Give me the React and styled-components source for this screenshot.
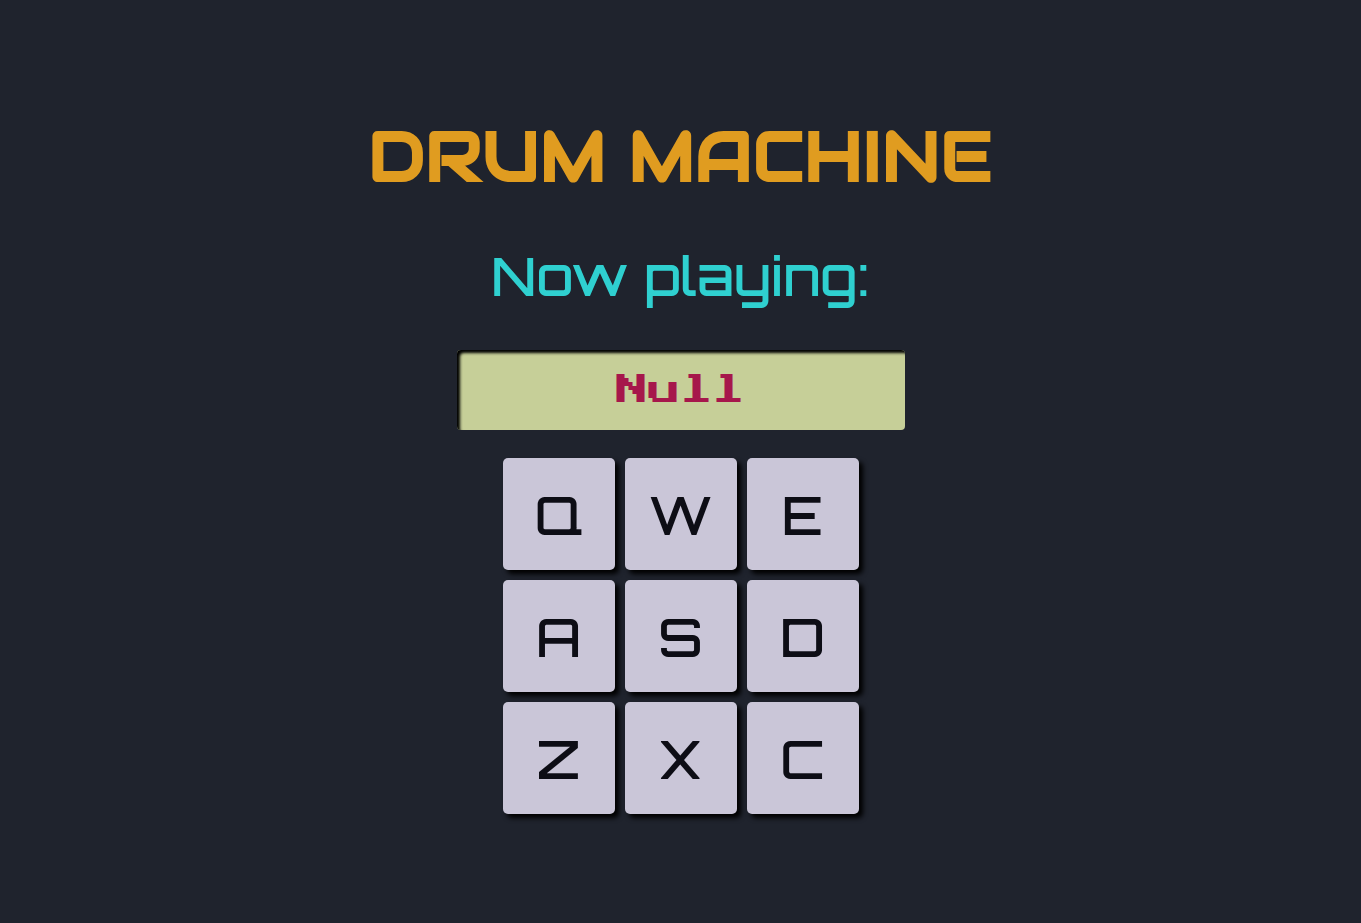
import React, { Component } from 'react';
import styled, { createGlobalStyle } from 'styled-components';


const GlobalStyle = createGlobalStyle`
  body {
    margin: 0;
    background-color: #1f232d;
    font-family: Orbitron, 'DejaVu Sans', sans-serif;
  }
`

const keys = ['Q', 'W', 'E', 'A', 'S', 'D', 'Z', 'X', 'C'];


class App extends Component {

  state = {
    playing : 'Null'
  }

  componentDidMount() {
    window.addEventListener('keydown', this.handleKeyDown);
  }

  componentWillUnmount() {
    window.removeEventListener('keydown', this.handleKeyDown);
  }

  handleKeyDown = (e) => {
    const key = e.key.toUpperCase();
    if (keys.includes(key)) {
      this.play(key);
    }
  }

  play = (key) => {
    this.setState({ playing: key });
  }

  render() {
    return (
      <Machine>
        <GlobalStyle />
        <Title>DRUM MACHINE</Title>
        <Subtitle id="now-playing">Now playing:</Subtitle>
        <Display aria-labelledby="now-playing">{this.state.playing}</Display>
        <Pads>
          {keys.map((key) => (
            <Pad key={key} type="button" onClick={() => this.play(key)}>{key}</Pad>
          ))}
        </Pads>
      </Machine>
    );
  }
}


const Machine = styled.main`
  box-sizing: border-box;
  min-height: 100vh;
  padding-top: 6px;
  display: flex;
  flex-direction: column;
  align-items: center;
  justify-content: center;
`

const Title = styled.h1`
  margin: 0 0 42px;
  color: #e09c20;
  font-family: Audiowide, Orbitron, 'DejaVu Sans', sans-serif;
  font-size: 69px;
  font-weight: bold;
  line-height: 82px;
  text-align: center;
`

const Subtitle = styled.h2`
  margin: 0 0 40px;
  color: #2fd0d0;
  font-size: 54px;
  font-weight: 500;
  line-height: 70px;
`

// lcd screen
const Display = styled.output`
  box-sizing: border-box;
  width: 448px;
  max-width: 100%;
  margin-bottom: 28px;
  padding: 8px;
  border-radius: 4px;
  background-color: #c6cf98;
  box-shadow: inset 3px 3px 3px #000;
  color: #a6174b;
  font-family: 'Press Start 2P', 'Liberation Mono', monospace;
  font-size: 32px;
  line-height: 64px;
  text-align: center;
`

const Pads = styled.div`
  display: grid;
  grid-template-columns: repeat(3, 112px);
  grid-auto-rows: 112px;
  gap: 10px;
`

const Pad = styled.button`
  padding: 0;
  border: none;
  border-radius: 5px;
  background-color: #cac6d8;
  box-shadow: 4px 4px 5px #000;
  color: #0d0d15;
  font-family: inherit;
  font-size: 54px;
  font-weight: 500;
  cursor: pointer;

  &:active {
    box-shadow: 1px 1px 2px #000;
  }
`

export default App;
